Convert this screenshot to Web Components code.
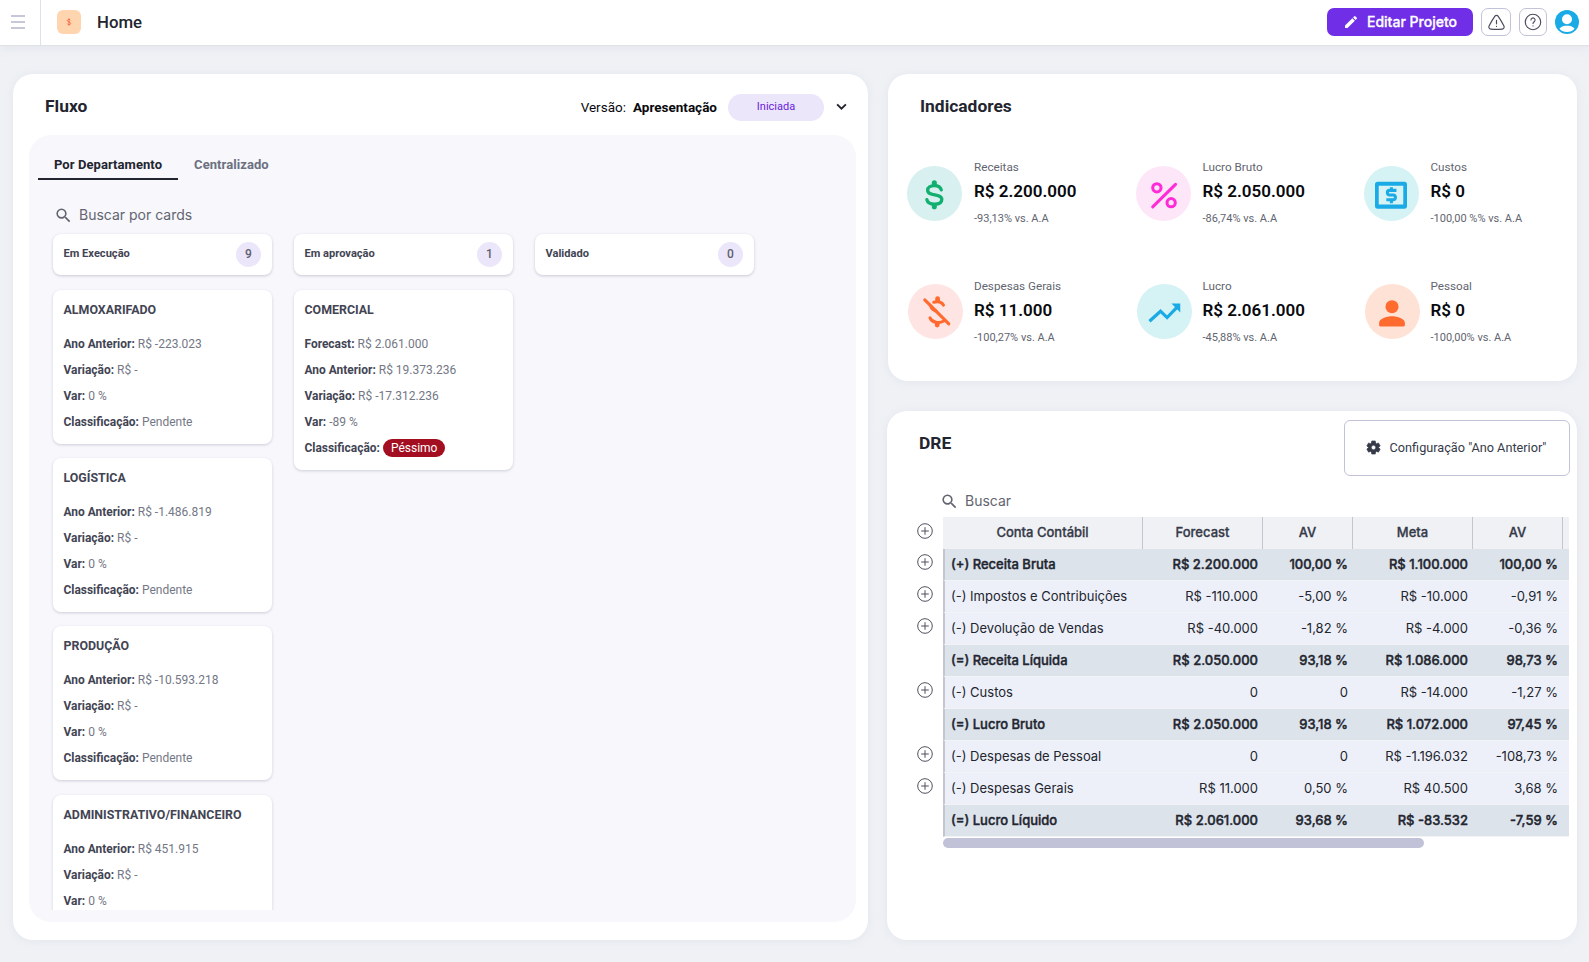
<!DOCTYPE html>
<html lang="pt-BR">
<head>
<meta charset="utf-8">
<title>Home</title>
<style>
  html, body { height: 100%; margin: 0; }
  body {
    --font-ui: Roboto, "Liberation Sans", sans-serif;
    --font-data: Inter, "Liberation Sans", sans-serif;
    --ink: #22252f;
    --ink-soft: #424453;
    --muted: #6b7080;
    --line: #c1c3d8;
    background: #eff1f5;
    color: var(--ink);
    font-family: var(--font-ui);
    overflow: hidden;
  }
</style>
</head>
<body>
<home-page></home-page>

<script>
(() => {
  const ICONS = {
    menu: '<path d="M1.500 3h21M1.500 12h21M1.500 21h21" fill="none" stroke="currentColor" stroke-width="2.500"/>',
    coin: '<path d="M17 7c-1-2-3-2.700-5-2.700-3 0-5 1.500-5 3.700 0 5 10 3 10 8 0 2.300-2 3.700-5 3.700-2.500 0-4.500-1-5-3M12 1v22" fill="none" stroke="currentColor" stroke-width="2.600"/>',
    pencil: '<path fill="currentColor" d="M3 17.25V21h3.750L17.810 9.940l-3.750-3.750zM20.710 7.040a1 1 0 0 0 0-1.410l-2.340-2.340a1 1 0 0 0-1.410 0l-1.830 1.830 3.750 3.750z"/>',
    alert: '<g fill="none" stroke="currentColor" stroke-width="1.500" stroke-linecap="round" stroke-linejoin="round"><path d="M9.800 4.200a2.700 2.700 0 0 1 4.400 0q4 5.800 7.200 12.200a2.800 2.800 0 0 1-2.200 4q-7.200.8-14.400 0a2.800 2.800 0 0 1-2.200-4q3.200-6.400 7.200-12.200z"/><path d="M12 9.300v4.400M12 16.700v.2"/></g>',
    help: '<g fill="none" stroke="currentColor" stroke-width="1.500" stroke-linecap="round"><circle cx="12" cy="12" r="10.300"/><path d="M9.300 9.300a2.750 2.750 0 1 1 4.300 2.300c-1 .7-1.600 1.100-1.600 2.300M12 17v.2"/></g>',
    avatar: '<circle cx="12" cy="12" r="12" fill="currentColor"/><circle cx="12" cy="9.200" r="5" fill="#fff"/><path d="M4.400 18.800c2-2.600 4.600-3.100 7.600-3.100s5.600.5 7.600 3.100c-2 2.200-4.600 3.200-7.600 3.200s-5.600-1-7.600-3.200z" fill="#fff"/>',
    chevron: '<path d="M5 8.500l7 7 7-7" fill="none" stroke="currentColor" stroke-width="3"/>',
    search: '<path fill="currentColor" d="M15.500 14h-.79l-.28-.27A6.470 6.470 0 0 0 16 9.500 6.500 6.500 0 1 0 9.500 16c1.610 0 3.090-.59 4.230-1.570l.27.28v.79l5 4.990L20.490 19zm-6 0C7.010 14 5 11.990 5 9.500S7.010 5 9.500 5 14 7.010 14 9.500 11.990 14 9.500 14z"/>',
    plus: '<g fill="none" stroke="currentColor" stroke-width="1"><circle cx="8" cy="8" r="7.300"/><path d="M8 4.200v7.600M4.200 8h7.600"/></g>',
    gear: '<path fill="currentColor" fill-rule="evenodd" stroke="currentColor" stroke-width="1" stroke-linejoin="round" d="M9.200 1.500h5.600l.6 3.400 1.500.9 3-1.200 2.800 4.900-2.500 2.100v.8l2.500 2.100-2.800 4.900-3-1.200-1.500.9-.6 3.400H9.200l-.6-3.400-1.500-.9-3 1.200-2.800-4.900 2.500-2.100v-.8L1.300 9.500l2.800-4.900 3 1.200 1.500-.9zM12 8.400a3.600 3.600 0 1 0 0 7.200 3.600 3.600 0 0 0 0-7.200z"/>',
    dollar: '<path d="M16.700 8.900c-.6-2-2.400-3.200-5.200-3.200-3 0-5 1.300-5 3.400 0 5 10.600 2.100 10.600 7 0 2.200-2.200 3.500-5.500 3.500-3.200 0-5.200-1.200-5.700-3.400" fill="none" stroke="currentColor" stroke-width="2.500" stroke-linecap="round"/><path d="M11.500 3.500v1M11.500 20.600v1" stroke="currentColor" stroke-width="3.800" stroke-linecap="round"/>',
    percent: '<g fill="none" stroke="currentColor"><circle cx="7.400" cy="7.400" r="3.100" stroke-width="2.300"/><circle cx="18.100" cy="18.500" r="3.100" stroke-width="2.300"/><path d="M4.300 21.700L21.400 4.800" stroke-width="2.300" stroke-linecap="round"/></g>',
    cash: '<path fill="currentColor" fill-rule="evenodd" d="M2 2.800h20a2 2 0 0 1 2 2V21a2 2 0 0 1-2 2H2a2 2 0 0 1-2-2V4.800a2 2 0 0 1 2-2zm.8 3v14h18.400v-14z"/><path d="M16.100 9.300h-5.300a1.500 1.500 0 0 0-1.500 1.500v.5a1.500 1.500 0 0 0 1.500 1.500h3a1.500 1.500 0 0 1 1.500 1.500v.5a1.500 1.500 0 0 1-1.500 1.500H8.500M12.300 6.900v2M12.300 16.800v2.200" fill="none" stroke="currentColor" stroke-width="2.300"/>',
    noDollar: '<g fill="none" stroke="currentColor" stroke-width="2.300" stroke-linecap="round"><path d="M3.600 2.900l18 18"/><path d="M10.300 4.700c3-1 6.300-.2 7.300 2.200M7.500 16.400c1.400 3.600 7 4.500 10.300 2.400M8.200 7.500c0 2 1.600 3 3.800 3.700" /><path d="M13.200 2v1M12.900 20.800v1" stroke-width="3.600"/></g>',
    trend: '<path d="M1.100 18.900l8.300-7.500 4.900 4.800 7.200-7.400" fill="none" stroke="currentColor" stroke-width="2.400"/><path fill="currentColor" d="M17.600 5.600h6.600v6.800z"/>',
    person: '<circle cx="12" cy="8" r="4.900" fill="currentColor"/><path fill="currentColor" d="M12 15.200c4 0 9.700 1.600 9.700 5.200v1.400q0 1-1 1H3.300q-1 0-1-1v-1.400c0-3.600 5.700-5.200 9.700-5.200z"/>',
  };

  const define = (name, render) => {
    customElements.define(name, class extends HTMLElement {
      connectedCallback() {
        if (this.shadowRoot) return;
        this.attachShadow({ mode: 'open' }).innerHTML = render(this);
      }
    });
  };

  define('ui-icon', (el) => `
    <style>
      :host { display: inline-flex; flex: none; width: 16px; height: 16px; }
      svg { width: 100%; height: 100%; display: block; overflow: visible; }
    </style>
    <svg viewBox="${el.getAttribute('box') || '0 0 24 24'}">${ICONS[el.getAttribute('name')]}</svg>
  `);

  define('icon-button', () => `
    <style>
      :host {
        display: flex;
        align-items: center;
        justify-content: center;
        box-sizing: border-box;
        width: 28px;
        height: 28px;
        border: 1px solid var(--line);
        border-radius: 7px;
        color: #4a4d5c;
      }
    </style>
    <slot></slot>
  `);

  define('app-header', () => `
    <style>
      :host {
        display: flex;
        align-items: center;
        box-sizing: border-box;
        height: 45px;
        padding: 0 10px 1px 0;
        background: #fff;
        box-shadow: 0 1px 1px #dfe3e8, 0 3px 10px rgba(150, 165, 180, .13);
      }
      .menu {
        display: flex;
        align-items: center;
        box-sizing: border-box;
        width: 41px;
        height: 45px;
        margin-bottom: -1px;
        padding: 0 0 1px 10px;
        border-right: 1px solid #dde2ea;
        color: #b5b7ca;
      }
      .menu ui-icon { width: 16px; height: 16px; }
      .logo {
        display: flex;
        align-items: center;
        justify-content: center;
        width: 24px;
        height: 24px;
        margin: 0 16px;
        border-radius: 6px;
        background: #ffd5b0;
        color: #f4623a;
      }
      .logo ui-icon { width: 8px; height: 8px; }
      h1 { flex: 1; margin: 0; font: 500 16.800px/20px var(--font-ui); }
      .edit {
        display: flex;
        align-items: center;
        gap: 8px;
        box-sizing: border-box;
        width: 146px;
        height: 28px;
        padding-left: 16px;
        border-radius: 7px;
        background: #702ee6;
        color: #fff;
        font: 500 14px/20px var(--font-data);
        -webkit-text-stroke: .3px #fff;
      }
      .edit ui-icon { width: 16px; height: 16px; }
      .edit span { white-space: nowrap; }
      .wide { width: 30px; margin: 0 8px; }
      .alert { width: 19px; height: 19px; }
      .help { width: 18px; height: 18px; }
      .avatar { width: 24px; height: 24px; margin-left: 8px; color: #1aabe6; }
    </style>
    <div class="menu"><ui-icon name="menu"></ui-icon></div>
    <div class="logo"><ui-icon name="coin"></ui-icon></div>
    <h1><slot></slot></h1>
    <div class="edit"><ui-icon name="pencil"></ui-icon><span>Editar Projeto</span></div>
    <icon-button class="wide"><ui-icon class="alert" name="alert"></ui-icon></icon-button>
    <icon-button><ui-icon class="help" name="help"></ui-icon></icon-button>
    <ui-icon class="avatar" name="avatar"></ui-icon>
  `);

  define('panel-card', (el) => `
    <style>
      :host {
        display: flex;
        flex-direction: column;
        box-sizing: border-box;
        border-radius: 20px;
        background: #fff;
        box-shadow: 0 1px 10px rgba(150, 165, 180, .13);
      }
      header { display: flex; height: 61px; padding: 0 20px 0 32px; flex: none; }
      h2 { flex: 1; margin: 22px 0 0; font: 700 17.400px/20px var(--font-ui); }
    </style>
    <header><h2>${el.getAttribute('heading')}</h2><slot name="actions"></slot></header>
    <slot></slot>
  `);

  define('version-picker', () => `
    <style>
      :host { display: flex; align-items: center; height: 27px; margin-top: 20px; color: #08090d; font: 400 13.500px/20px var(--font-ui); }
      span, b { padding-bottom: 2px; }
      b { margin: 0 11px 0 7px; }
      .pill {
        width: 96px;
        height: 27px;
        border-radius: 14px;
        background: #ebe6fa;
        color: #6a22dd;
        font-size: 11px;
        line-height: 25px;
        text-align: center;
      }
      ui-icon { width: 15px; height: 15px; margin: 0 -1px 2px 10px; color: #22252f; }
    </style>
    <span>Versão:</span><b>Apresentação</b>
    <div class="pill">Iniciada</div>
    <ui-icon name="chevron"></ui-icon>
  `);

  define('search-field', () => `
    <style>
      :host { display: flex; align-items: center; gap: 6px; height: 20px; color: #62656f; font: 400 14px/20px var(--font-data); }
      ui-icon { width: 19px; height: 19px; }
    </style>
    <ui-icon name="search"></ui-icon><slot></slot>
  `);

  define('tab-item', () => `
    <style>
      :host { display: block; box-sizing: border-box; height: 31px; padding: 0 16px; color: var(--muted); font: 700 13px/31px var(--font-ui); letter-spacing: .07px; white-space: nowrap; }
      :host([active]) { color: var(--ink); border-bottom: 2px solid var(--ink); }
    </style>
    <slot></slot>
  `);

  define('flow-column', (el) => `
    <style>
      :host { display: flex; flex-direction: column; gap: 14.200px; width: 219px; flex: none; }
      header {
        display: flex;
        flex: none;
        justify-content: space-between;
        box-sizing: border-box;
        height: 41px;
        margin-bottom: .8px;
        padding: 8px 11px 0 10.500px;
        border-radius: 8px;
        background: #fff;
        box-shadow: 0 1px 3px rgba(60, 64, 90, .25);
        color: var(--ink-soft);
        font: 700 11.100px/24px var(--font-ui);
      }
      .count {
        width: 25px;
        height: 25px;
        border-radius: 50%;
        background: #ebe6fa;
        color: #5d606e;
        font: 500 12px/25px var(--font-ui);
        text-align: center;
      }
    </style>
    <header><span>${el.getAttribute('heading')}</span><span class="count">${el.getAttribute('count')}</span></header>
    <slot></slot>
  `);

  define('flow-card', (el) => `
    <style>
      :host {
        display: block;
        box-sizing: border-box;
        padding: 10px 10.500px 9px;
        flex: none;
        border-radius: 8px;
        background: #fff;
        box-shadow: 0 1px 3px rgba(60, 64, 90, .22);
        color: var(--ink-soft);
      }
      h3 { margin: 0 0 11px; font: 700 12.400px/20px var(--font-ui); }
    </style>
    <h3>${el.getAttribute('heading')}</h3>
    <slot></slot>
  `);

  define('flow-row', (el) => `
    <style>
      :host { display: flex; align-items: center; gap: 3px; height: 26px; color: #747785; font: 400 12px/18px var(--font-ui); white-space: pre; }
      b { color: var(--ink-soft); font-size: 11.950px; }
      :host([bad]) span { padding: 0 8px; border-radius: 9px; background: #a30f20; color: #fff; }
    </style>
    <b>${el.getAttribute('label')}:</b><span><slot></slot></span>
  `);

  define('kpi-item', (el) => `
    <style>
      :host { display: flex; gap: 12px; }
      .disc {
        display: flex;
        align-items: center;
        justify-content: center;
        width: 55px;
        height: 55px;
        margin-top: 6px;
        flex: none;
        border-radius: 50%;
        background: var(--disc);
        color: var(--tone);
      }
      .disc ui-icon { width: 32px; height: 32px; }
      .text { margin-top: var(--text-top, -1px); }
      .label, .delta { color: #62656f; font: 400 11.700px/14px var(--font-ui); }
      .label { padding-top: 1px; }
      .value { margin: 5px 0 9px; color: #08090d; font: 600 17px/24px var(--font-ui); }
      .delta { font-size: 11px; }
      p { margin: 0; white-space: nowrap; }
    </style>
    <div class="disc"><ui-icon name="${el.getAttribute('icon')}"></ui-icon></div>
    <div class="text">
      <p class="label">${el.getAttribute('label')}</p>
      <p class="value">${el.getAttribute('value')}</p>
      <p class="delta">${el.getAttribute('delta')}</p>
    </div>
  `);

  define('config-button', () => `
    <style>
      :host {
        display: flex;
        align-items: center;
        justify-content: center;
        gap: 8px;
        box-sizing: border-box;
        width: 226px;
        height: 56px;
        margin: 9px -13px 0 0;
        border: 1px solid var(--line);
        border-radius: 6px;
        color: #363a48;
        font: 400 12.700px/20px var(--font-ui);
      }
      ui-icon { width: 15px; height: 15px; margin: 0 1px 1px -2px; }
    </style>
    <ui-icon name="gear"></ui-icon><slot></slot>
  `);

  const HEAD = ['Conta Contábil', 'Forecast', 'AV', 'Meta', 'AV'];
  // [expandable, is total, cells]
  const ROWS = [
    [1, 1, ['(+) Receita Bruta', 'R$ 2.200.000', '100,00 %', 'R$ 1.100.000', '100,00 %']],
    [1, 0, ['(-) Impostos e Contribuições', 'R$ -110.000', '-5,00 %', 'R$ -10.000', '-0,91 %']],
    [1, 0, ['(-) Devolução de Vendas', 'R$ -40.000', '-1,82 %', 'R$ -4.000', '-0,36 %']],
    [0, 1, ['(=) Receita Líquida', 'R$ 2.050.000', '93,18 %', 'R$ 1.086.000', '98,73 %']],
    [1, 0, ['(-) Custos', '0', '0', 'R$ -14.000', '-1,27 %']],
    [0, 1, ['(=) Lucro Bruto', 'R$ 2.050.000', '93,18 %', 'R$ 1.072.000', '97,45 %']],
    [1, 0, ['(-) Despesas de Pessoal', '0', '0', 'R$ -1.196.032', '-108,73 %']],
    [1, 0, ['(-) Despesas Gerais', 'R$ 11.000', '0,50 %', 'R$ 40.500', '3,68 %']],
    [0, 1, ['(=) Lucro Líquido', 'R$ 2.061.000', '93,68 %', 'R$ -83.532', '-7,59 %']],
  ];

  define('dre-table', () => `
    <style>
      :host { display: block; font: 400 13px/31px var(--font-data); }
      .line { display: flex; height: 32px; }
      .toggle { width: 26px; flex: none; padding-top: 5px; line-height: 0; color: #50535f; }
      .head .toggle { padding-top: 6px; }
      .cells {
        display: grid;
        grid-template-columns: 198px 120px 90px 120px 90px 6px;
        flex: 1;
        box-sizing: border-box;
        border-left: 2px solid #c3c6cf;
        border-bottom: 1px solid #f2f3f6;
        background: #edf0f8;
        white-space: nowrap;
      }
      .cells span { padding-right: 5px; text-align: right; }
      .cells span:first-child { padding: 0 0 0 6px; text-align: left; }
      .total .cells { background: #dde3eb; font-weight: 500; -webkit-text-stroke: .4px var(--ink); }
      .head .cells {
        grid-template-columns: 200px 120px 90px 120px 90px 6px;
        border: 0;
        background: #eff1f5;
        color: #363a48;
        font-weight: 500;
        -webkit-text-stroke: .3px #363a48;
      }
      .head .cells span, .head .cells span:first-child { padding: 0; border-right: 1px solid #c3c6cf; text-align: center; }
      .bar { width: 481px; height: 10px; margin: 1px 0 0 26px; border-radius: 5px; background: #c1c2d8; }
    </style>
    <div class="line head">
      <div class="toggle"><ui-icon name="plus" box="0 0 16 16"></ui-icon></div>
      <div class="cells">${HEAD.map((text) => `<span>${text}</span>`).join('')}</div>
    </div>
    ${ROWS.map(([expandable, total, cells]) => `
      <div class="line ${total ? 'total' : ''}">
        <div class="toggle">${expandable ? '<ui-icon name="plus" box="0 0 16 16"></ui-icon>' : ''}</div>
        <div class="cells">${cells.map((text) => `<span>${text}</span>`).join('')}</div>
      </div>
    `).join('')}
    <div class="bar"></div>
  `);

  const pending = (name, value) => `
    <flow-card heading="${name}">
      <flow-row label="Ano Anterior">${value}</flow-row>
      <flow-row label="Variação">R$ -</flow-row>
      <flow-row label="Var">0 %</flow-row>
      <flow-row label="Classificação">Pendente</flow-row>
    </flow-card>
  `;

  define('home-page', () => `
    <style>
      :host { display: block; height: 962px; }
      main { display: grid; grid-template-columns: 855px 1fr; gap: 20px; padding: 29px 12px 0 13px; }
      .right { display: flex; flex-direction: column; gap: 30px; }
      .flow { height: 866px; }
      .board {
        display: flex;
        flex-direction: column;
        box-sizing: border-box;
        height: 787px;
        margin: 0 12px 0 16px;
        padding: 14px 9px 12px;
        border-radius: 22px;
        background: #f7f7fc;
      }
      .tabs { display: flex; flex: none; }
      .board search-field { margin: 25px 0 0 16px; flex: none; }
      .columns { display: flex; gap: 22px; margin-left: 9px; padding: 9px 6px 0; flex: 1; min-height: 0; overflow: hidden; }
      .kpis { height: 307px; }
      .grid { display: grid; grid-template-columns: 228.500px 228px 200px; row-gap: 48px; padding: 25px 0 0 19px; }
      .grid kpi-item { height: 70px; }
      .grid kpi-item:nth-child(n + 4) { --text-top: 0px; gap: 11px; margin-left: 1px; }
      .dre { height: 529px; margin-left: -1px; }
      .dre search-field { margin: 19px 0 0 53px; flex: none; }
      dre-table { margin: 6px 8px 0 30px; }
    </style>
    <app-header>Home</app-header>
    <main>
      <panel-card class="flow" heading="Fluxo">
        <version-picker slot="actions"></version-picker>
        <div class="board">
          <div class="tabs"><tab-item active>Por Departamento</tab-item><tab-item>Centralizado</tab-item></div>
          <search-field>Buscar por cards</search-field>
          <div class="columns">
            <flow-column heading="Em Execução" count="9">
              ${pending('ALMOXARIFADO', 'R$ -223.023')}
              ${pending('LOGÍSTICA', 'R$ -1.486.819')}
              ${pending('PRODUÇÃO', 'R$ -10.593.218')}
              ${pending('ADMINISTRATIVO/FINANCEIRO', 'R$ 451.915')}
            </flow-column>
            <flow-column heading="Em aprovação" count="1">
              <flow-card heading="COMERCIAL">
                <flow-row label="Forecast">R$ 2.061.000</flow-row>
                <flow-row label="Ano Anterior">R$ 19.373.236</flow-row>
                <flow-row label="Variação">R$ -17.312.236</flow-row>
                <flow-row label="Var">-89 %</flow-row>
                <flow-row label="Classificação" bad>Péssimo</flow-row>
              </flow-card>
            </flow-column>
            <flow-column heading="Validado" count="0"></flow-column>
          </div>
        </div>
      </panel-card>
      <div class="right">
        <panel-card class="kpis" heading="Indicadores">
          <div class="grid">
            <kpi-item icon="dollar" label="Receitas" value="R$ 2.200.000" delta="-93,13% vs. A.A" style="--disc:#d8f0ef;--tone:#12b070"></kpi-item>
            <kpi-item icon="percent" label="Lucro Bruto" value="R$ 2.050.000" delta="-86,74% vs. A.A" style="--disc:#fee6f9;--tone:#ff2bd6"></kpi-item>
            <kpi-item icon="cash" label="Custos" value="R$ 0" delta="-100,00 %% vs. A.A" style="--disc:#d5f2f5;--tone:#1aabe6"></kpi-item>
            <kpi-item icon="noDollar" label="Despesas Gerais" value="R$ 11.000" delta="-100,27% vs. A.A" style="--disc:#fee5e3;--tone:#ff6a2e"></kpi-item>
            <kpi-item icon="trend" label="Lucro" value="R$ 2.061.000" delta="-45,88% vs. A.A" style="--disc:#d5f2f5;--tone:#1aabe6"></kpi-item>
            <kpi-item icon="person" label="Pessoal" value="R$ 0" delta="-100,00% vs. A.A" style="--disc:#ffe2d6;--tone:#ff6a2e"></kpi-item>
          </div>
        </panel-card>
        <panel-card class="dre" heading="DRE">
          <config-button slot="actions">Configuração "Ano Anterior"</config-button>
          <search-field>Buscar</search-field>
          <dre-table></dre-table>
        </panel-card>
      </div>
    </main>
  `);
})();
</script>
</body>
</html>
